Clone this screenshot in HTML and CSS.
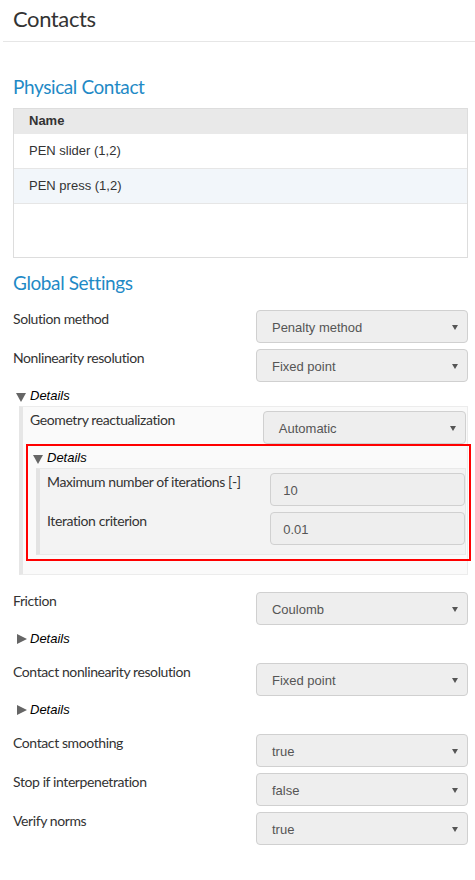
FILE: index.html
```html
<!DOCTYPE html>
<html lang="en">
<head>
<meta charset="utf-8">
<title>Contacts</title>
<link rel="stylesheet" href="styles.css">
</head>
<body>
<header class="page-header"><h1 class="page-title">Contacts</h1></header>
<main class="content">
  <h2 class="section-title first">Physical Contact</h2>
  <div class="table">
    <div class="table-head">Name</div>
    <div class="table-row">PEN slider (1,2)</div>
    <div class="table-row alt">PEN press (1,2)</div>
  </div>

  <h2 class="section-title second">Global Settings</h2>

  <div class="field"><span class="label">Solution method</span><div class="select"><span>Penalty method</span><i class="caret"></i></div></div>
  <div class="field"><span class="label">Nonlinearity resolution</span><div class="select"><span>Fixed point</span><i class="caret"></i></div></div>

  <div class="details expanded">
    <div class="summary"><i class="tri down"></i><span>Details</span></div>
    <div class="panel">
      <div class="field"><span class="label">Geometry reactualization</span><div class="select"><span>Automatic</span><i class="caret"></i></div></div>
      <div class="details nested">
        <div class="summary"><i class="tri down"></i><span>Details</span></div>
        <div class="panel inner">
          <div class="field"><span class="label">Maximum number of iterations [-]</span><div class="input">10</div></div>
          <div class="field"><span class="label">Iteration criterion</span><div class="input">0.01</div></div>
        </div>
        <div class="highlight"></div>
      </div>
    </div>
  </div>

  <div class="field"><span class="label">Friction</span><div class="select"><span>Coulomb</span><i class="caret"></i></div></div>
  <div class="details">
    <div class="summary"><i class="tri right"></i><span>Details</span></div>
  </div>

  <div class="field"><span class="label">Contact nonlinearity resolution</span><div class="select"><span>Fixed point</span><i class="caret"></i></div></div>
  <div class="details">
    <div class="summary"><i class="tri right"></i><span>Details</span></div>
  </div>

  <div class="field"><span class="label">Contact smoothing</span><div class="select"><span>true</span><i class="caret"></i></div></div>
  <div class="field"><span class="label">Stop if interpenetration</span><div class="select"><span>false</span><i class="caret"></i></div></div>
  <div class="field"><span class="label">Verify norms</span><div class="select"><span>true</span><i class="caret"></i></div></div>
</main>
</body>
</html>
```

FILE: styles.css
```css
* { box-sizing: border-box; }

body {
  margin: 0;
  background: #ffffff;
  color: #333333;
  font-family: Lato, "Open Sans", sans-serif;
}

.page-header {
  margin-left: 3px;
  padding: 6px 0 9px 10px;
  border-bottom: 1px solid #e6e6e6;
}

.page-title {
  margin: 0;
  font-weight: 400;
  font-size: 22px;
  line-height: 26px;
  letter-spacing: -0.4px;
  color: #333333;
}

.content {
  padding: 0 7px 40px 13px;
}

.section-title {
  margin: 0 0 9px;
  font-weight: 400;
  font-size: 19px;
  line-height: 24px;
  letter-spacing: -0.4px;
  color: #1f8ac6;
}

.section-title.first { margin-top: 33px; }
.section-title.second { margin-top: 13px; margin-bottom: 15px; }

.table {
  height: 150px;
  border: 1px solid #dddddd;
  font-family: "Liberation Sans", Arial, sans-serif;
  font-size: 13px;
  color: #333333;
}

.table-head {
  background: #e9e9e9;
  font-weight: bold;
  padding: 1px 15px 2px;
  line-height: 22px;
}

.table-row {
  height: 35px;
  line-height: 34px;
  padding: 0 15px;
  border-bottom: 1px solid #e6e6e6;
}

.table-row.alt { background: #f2f6fa; }

.field {
  display: grid;
  grid-template-columns: 53.4% 46.6%;
  margin-bottom: 6px;
}

.label {
  font-size: 14px;
  line-height: 16px;
  letter-spacing: -0.4px;
  color: #333333;
  padding-top: 1px;
  padding-right: 4px;
}

.select,
.input {
  height: 33px;
  border: 1px solid #d0d0d0;
  border-radius: 4px;
  background: #eeeeee;
  font-family: "Liberation Sans", Arial, sans-serif;
  font-size: 13px;
  line-height: 28px;
  color: #555555;
  padding-top: 3px;
}

.select {
  display: flex;
  justify-content: space-between;
  align-items: flex-start;
  padding-left: 15px;
  padding-right: 9px;
}

.input { padding-left: 12px; }

.caret {
  width: 0;
  height: 0;
  margin-top: 11px;
  border-left: 3px solid transparent;
  border-right: 3px solid transparent;
  border-top: 5px solid #555555;
}

.details { margin-bottom: 14px; }
.details.expanded { margin-bottom: 17px; }
.details.nested { position: relative; margin-bottom: 14px; }

.summary {
  display: flex;
  align-items: flex-start;
  height: 18px;
  padding-left: 3px;
  font-family: "Liberation Sans", Arial, sans-serif;
  font-style: italic;
  font-size: 13px;
  line-height: 16px;
  color: #000000;
}

.tri { display: block; width: 0; height: 0; }

.tri.down {
  margin-top: 5px;
  margin-right: 4px;
  border-left: 5px solid transparent;
  border-right: 5px solid transparent;
  border-top: 9px solid #666666;
}

.tri.right {
  margin-top: 3px;
  margin-left: 1px;
  margin-right: 3px;
  border-top: 5px solid transparent;
  border-bottom: 5px solid transparent;
  border-left: 10px solid #666666;
}

.panel {
  margin-left: 6px;
  border-left: 4px solid #e6e6e6;
  border-top: 1px solid #ececec;
  border-right: 1px solid #ececec;
  border-bottom: 1px solid #ececec;
  background: #fafafa;
  padding: 4px 1px 5px 7px;
}

.panel.inner {
  background: #f3f3f3;
  border-left: 4px solid #e3e3e3;
  border-top: 1px solid #e9e9e9;
  border-right: 1px solid #e9e9e9;
  border-bottom: 1px solid #e9e9e9;
  padding: 4px 0 3px 7px;
}

.highlight {
  position: absolute;
  top: -6px;
  bottom: -6px;
  left: -4px;
  right: -5px;
  border: 2px solid #ff0000;
  pointer-events: none;
}
```
